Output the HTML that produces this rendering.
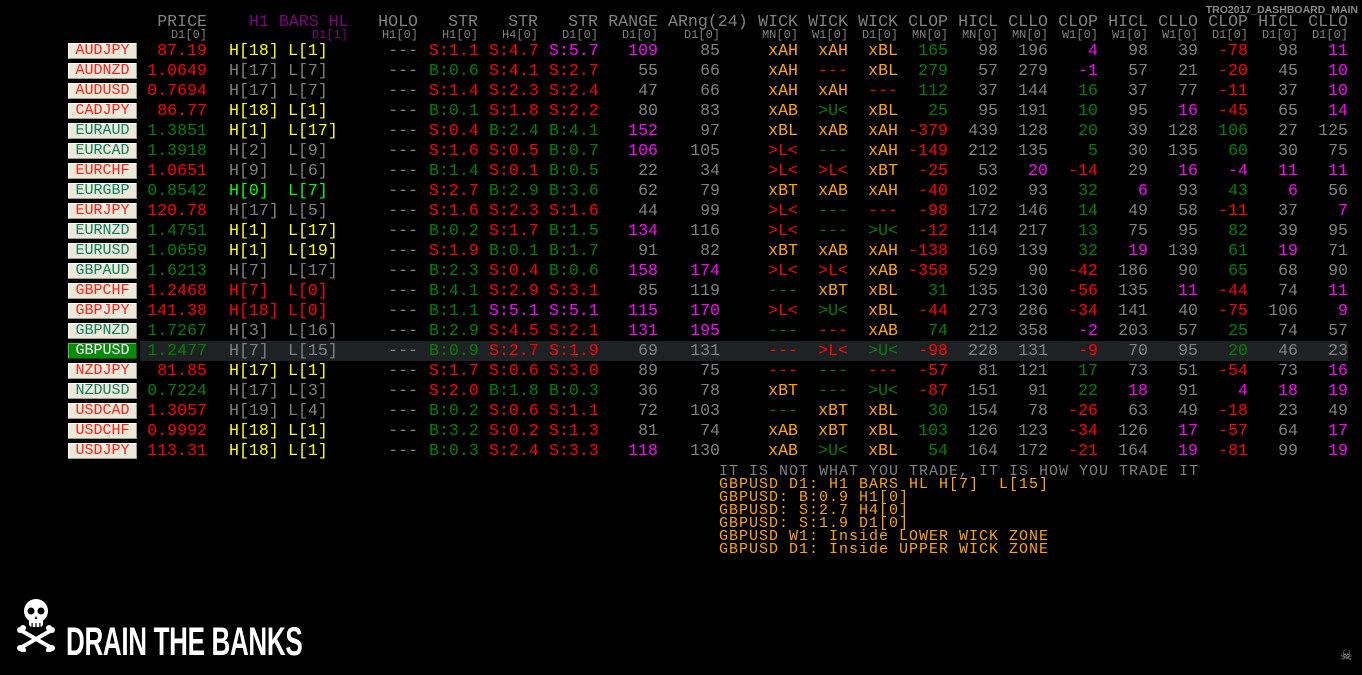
<!DOCTYPE html>
<html><head><meta charset="utf-8"><style>
html,body{margin:0;padding:0;background:#000;width:1362px;height:675px;overflow:hidden}
body{position:relative;font-family:"Liberation Mono","DejaVu Sans Mono",monospace;font-size:16.6px;color:#808080}
.r{position:absolute;left:0;width:1362px;height:20px;line-height:20px}
.r span{position:absolute;white-space:pre}
.b{left:68px;top:2px;width:69px;height:16px;line-height:16px;background:#ece9d8;text-align:center;font-size:15px;box-shadow:inset -1px -1px 0 #a09c8c,inset 1px 1px 0 #fff}
.bg{background:#0a8a0a;color:#fff!important;box-shadow:inset -1px -1px 0 #05500a,inset 1px 1px 0 #4c4}
.p{left:137px;width:70px;text-align:right}
.h{left:229px}.l{left:288px}
.o{left:378px;width:40px;text-align:right;color:#808080}
.s1{left:429px}.s2{left:489px}.s3{left:549px}
.w{width:50px;text-align:right}
.x1{left:608px}.x2{left:670px}.x3{left:748px}.x4{left:798px}.x5{left:848px}.x6{left:898px}.x7{left:948px}.x8{left:998px}.x9{left:1048px}.x10{left:1098px}.x11{left:1148px}.x12{left:1198px}.x13{left:1248px}.x14{left:1298px}
.R{color:#ff0000}.g{color:#008000}.y{color:#ffff00}.G{color:#808080}.m{color:#ff00ff}.O{color:#ffa500}.L{color:#00ff00}.t{color:#108060}.br{color:#ff2020}
.hd{position:absolute;top:12px;height:20px;line-height:20px;color:#808080;white-space:pre;text-align:right}
.sb{position:absolute;top:29px;font-size:12px;line-height:12px;color:#808080;white-space:pre;text-align:right}
.note{position:absolute;left:719px;top:465px;line-height:13px;white-space:pre;color:#ffa500;font-size:15px;letter-spacing:1px}
</style></head><body>
<div style="position:absolute;right:4px;top:4px;font:bold 10.5px 'Liberation Sans',sans-serif;color:#8a8a8a;white-space:nowrap">TRO2017_DASHBOARD_MAIN</div>

<div class="hd" style="left:137px;width:70px">PRICE</div><div class="sb" style="left:137px;width:70px">D1[0]</div>
<div class="hd" style="left:249px;color:#800080">H1 BARS HL</div><div class="sb" style="left:298px;width:50px;color:#800080">D1[1]</div>
<div class="hd" style="left:368px;width:50px">HOLO</div><div class="sb" style="left:368px;width:50px">H1[0]</div>
<div class="hd" style="left:428px;width:50px">STR</div><div class="sb" style="left:428px;width:50px">H1[0]</div>
<div class="hd" style="left:488px;width:50px">STR</div><div class="sb" style="left:488px;width:50px">H4[0]</div>
<div class="hd" style="left:548px;width:50px">STR</div><div class="sb" style="left:548px;width:50px">D1[0]</div>
<div class="hd" style="left:598px;width:60px">RANGE</div><div class="sb" style="left:608px;width:50px">D1[0]</div>
<div class="hd" style="left:668px">ARng(24)</div><div class="sb" style="left:670px;width:50px">D1[0]</div>
<div class="hd" style="left:748px;width:50px">WICK</div><div class="sb" style="left:748px;width:50px">MN[0]</div>
<div class="hd" style="left:798px;width:50px">WICK</div><div class="sb" style="left:798px;width:50px">W1[0]</div>
<div class="hd" style="left:848px;width:50px">WICK</div><div class="sb" style="left:848px;width:50px">D1[0]</div>
<div class="hd" style="left:898px;width:50px">CLOP</div><div class="sb" style="left:898px;width:50px">MN[0]</div>
<div class="hd" style="left:948px;width:50px">HICL</div><div class="sb" style="left:948px;width:50px">MN[0]</div>
<div class="hd" style="left:998px;width:50px">CLLO</div><div class="sb" style="left:998px;width:50px">MN[0]</div>
<div class="hd" style="left:1048px;width:50px">CLOP</div><div class="sb" style="left:1048px;width:50px">W1[0]</div>
<div class="hd" style="left:1098px;width:50px">HICL</div><div class="sb" style="left:1098px;width:50px">W1[0]</div>
<div class="hd" style="left:1148px;width:50px">CLLO</div><div class="sb" style="left:1148px;width:50px">W1[0]</div>
<div class="hd" style="left:1198px;width:50px">CLOP</div><div class="sb" style="left:1198px;width:50px">D1[0]</div>
<div class="hd" style="left:1248px;width:50px">HICL</div><div class="sb" style="left:1248px;width:50px">D1[0]</div>
<div class="hd" style="left:1298px;width:50px">CLLO</div><div class="sb" style="left:1298px;width:50px">D1[0]</div>

<div class="r" style="top:41px"><span class="b br">AUDJPY</span><span class="p R">87.19</span><span class="h y">H[18]</span><span class="l y">L[1]</span><span class="o">---</span><span class="s1 R">S:1.1</span><span class="s2 R">S:4.7</span><span class="s3 m">S:5.7</span><span class="w x1 m">109</span><span class="w x2 G">85</span><span class="w x3 O">xAH</span><span class="w x4 O">xAH</span><span class="w x5 O">xBL</span><span class="w x6 g">165</span><span class="w x7 G">98</span><span class="w x8 G">196</span><span class="w x9 m">4</span><span class="w x10 G">98</span><span class="w x11 G">39</span><span class="w x12 R">-78</span><span class="w x13 G">98</span><span class="w x14 m">11</span></div>
<div class="r" style="top:61px"><span class="b br">AUDNZD</span><span class="p R">1.0649</span><span class="h G">H[17]</span><span class="l G">L[7]</span><span class="o">---</span><span class="s1 g">B:0.6</span><span class="s2 R">S:4.1</span><span class="s3 R">S:2.7</span><span class="w x1 G">55</span><span class="w x2 G">66</span><span class="w x3 O">xAH</span><span class="w x4 R">---</span><span class="w x5 O">xBL</span><span class="w x6 g">279</span><span class="w x7 G">57</span><span class="w x8 G">279</span><span class="w x9 m">-1</span><span class="w x10 G">57</span><span class="w x11 G">21</span><span class="w x12 R">-20</span><span class="w x13 G">45</span><span class="w x14 m">10</span></div>
<div class="r" style="top:81px"><span class="b br">AUDUSD</span><span class="p R">0.7694</span><span class="h G">H[17]</span><span class="l G">L[7]</span><span class="o">---</span><span class="s1 R">S:1.4</span><span class="s2 R">S:2.3</span><span class="s3 R">S:2.4</span><span class="w x1 G">47</span><span class="w x2 G">66</span><span class="w x3 O">xAH</span><span class="w x4 O">xAH</span><span class="w x5 R">---</span><span class="w x6 g">112</span><span class="w x7 G">37</span><span class="w x8 G">144</span><span class="w x9 g">16</span><span class="w x10 G">37</span><span class="w x11 G">77</span><span class="w x12 R">-11</span><span class="w x13 G">37</span><span class="w x14 m">10</span></div>
<div class="r" style="top:101px"><span class="b br">CADJPY</span><span class="p R">86.77</span><span class="h y">H[18]</span><span class="l y">L[1]</span><span class="o">---</span><span class="s1 g">B:0.1</span><span class="s2 R">S:1.8</span><span class="s3 R">S:2.2</span><span class="w x1 G">80</span><span class="w x2 G">83</span><span class="w x3 O">xAB</span><span class="w x4 g">&gt;U&lt;</span><span class="w x5 O">xBL</span><span class="w x6 g">25</span><span class="w x7 G">95</span><span class="w x8 G">191</span><span class="w x9 g">10</span><span class="w x10 G">95</span><span class="w x11 m">16</span><span class="w x12 R">-45</span><span class="w x13 G">65</span><span class="w x14 m">14</span></div>
<div class="r" style="top:121px"><span class="b t">EURAUD</span><span class="p g">1.3851</span><span class="h y">H[1]</span><span class="l y">L[17]</span><span class="o">---</span><span class="s1 R">S:0.4</span><span class="s2 g">B:2.4</span><span class="s3 g">B:4.1</span><span class="w x1 m">152</span><span class="w x2 G">97</span><span class="w x3 O">xBL</span><span class="w x4 O">xAB</span><span class="w x5 O">xAH</span><span class="w x6 R">-379</span><span class="w x7 G">439</span><span class="w x8 G">128</span><span class="w x9 g">20</span><span class="w x10 G">39</span><span class="w x11 G">128</span><span class="w x12 g">106</span><span class="w x13 G">27</span><span class="w x14 G">125</span></div>
<div class="r" style="top:141px"><span class="b t">EURCAD</span><span class="p g">1.3918</span><span class="h G">H[2]</span><span class="l G">L[9]</span><span class="o">---</span><span class="s1 R">S:1.6</span><span class="s2 R">S:0.5</span><span class="s3 g">B:0.7</span><span class="w x1 m">106</span><span class="w x2 G">105</span><span class="w x3 R">&gt;L&lt;</span><span class="w x4 g">---</span><span class="w x5 O">xAH</span><span class="w x6 R">-149</span><span class="w x7 G">212</span><span class="w x8 G">135</span><span class="w x9 g">5</span><span class="w x10 G">30</span><span class="w x11 G">135</span><span class="w x12 g">60</span><span class="w x13 G">30</span><span class="w x14 G">75</span></div>
<div class="r" style="top:161px"><span class="b br">EURCHF</span><span class="p R">1.0651</span><span class="h G">H[9]</span><span class="l G">L[6]</span><span class="o">---</span><span class="s1 g">B:1.4</span><span class="s2 R">S:0.1</span><span class="s3 g">B:0.5</span><span class="w x1 G">22</span><span class="w x2 G">34</span><span class="w x3 R">&gt;L&lt;</span><span class="w x4 R">&gt;L&lt;</span><span class="w x5 O">xBT</span><span class="w x6 R">-25</span><span class="w x7 G">53</span><span class="w x8 m">20</span><span class="w x9 R">-14</span><span class="w x10 G">29</span><span class="w x11 m">16</span><span class="w x12 m">-4</span><span class="w x13 m">11</span><span class="w x14 m">11</span></div>
<div class="r" style="top:181px"><span class="b t">EURGBP</span><span class="p g">0.8542</span><span class="h L">H[0]</span><span class="l L">L[7]</span><span class="o">---</span><span class="s1 R">S:2.7</span><span class="s2 g">B:2.9</span><span class="s3 g">B:3.6</span><span class="w x1 G">62</span><span class="w x2 G">79</span><span class="w x3 O">xBT</span><span class="w x4 O">xAB</span><span class="w x5 O">xAH</span><span class="w x6 R">-40</span><span class="w x7 G">102</span><span class="w x8 G">93</span><span class="w x9 g">32</span><span class="w x10 m">6</span><span class="w x11 G">93</span><span class="w x12 g">43</span><span class="w x13 m">6</span><span class="w x14 G">56</span></div>
<div class="r" style="top:201px"><span class="b br">EURJPY</span><span class="p R">120.78</span><span class="h G">H[17]</span><span class="l G">L[5]</span><span class="o">---</span><span class="s1 R">S:1.6</span><span class="s2 R">S:2.3</span><span class="s3 R">S:1.6</span><span class="w x1 G">44</span><span class="w x2 G">99</span><span class="w x3 R">&gt;L&lt;</span><span class="w x4 g">---</span><span class="w x5 R">---</span><span class="w x6 R">-98</span><span class="w x7 G">172</span><span class="w x8 G">146</span><span class="w x9 g">14</span><span class="w x10 G">49</span><span class="w x11 G">58</span><span class="w x12 R">-11</span><span class="w x13 G">37</span><span class="w x14 m">7</span></div>
<div class="r" style="top:221px"><span class="b t">EURNZD</span><span class="p g">1.4751</span><span class="h y">H[1]</span><span class="l y">L[17]</span><span class="o">---</span><span class="s1 g">B:0.2</span><span class="s2 R">S:1.7</span><span class="s3 g">B:1.5</span><span class="w x1 m">134</span><span class="w x2 G">116</span><span class="w x3 R">&gt;L&lt;</span><span class="w x4 g">---</span><span class="w x5 g">&gt;U&lt;</span><span class="w x6 R">-12</span><span class="w x7 G">114</span><span class="w x8 G">217</span><span class="w x9 g">13</span><span class="w x10 G">75</span><span class="w x11 G">95</span><span class="w x12 g">82</span><span class="w x13 G">39</span><span class="w x14 G">95</span></div>
<div class="r" style="top:241px"><span class="b t">EURUSD</span><span class="p g">1.0659</span><span class="h y">H[1]</span><span class="l y">L[19]</span><span class="o">---</span><span class="s1 R">S:1.9</span><span class="s2 g">B:0.1</span><span class="s3 g">B:1.7</span><span class="w x1 G">91</span><span class="w x2 G">82</span><span class="w x3 O">xBT</span><span class="w x4 O">xAB</span><span class="w x5 O">xAH</span><span class="w x6 R">-138</span><span class="w x7 G">169</span><span class="w x8 G">139</span><span class="w x9 g">32</span><span class="w x10 m">19</span><span class="w x11 G">139</span><span class="w x12 g">61</span><span class="w x13 m">19</span><span class="w x14 G">71</span></div>
<div class="r" style="top:261px"><span class="b t">GBPAUD</span><span class="p g">1.6213</span><span class="h G">H[7]</span><span class="l G">L[17]</span><span class="o">---</span><span class="s1 g">B:2.3</span><span class="s2 R">S:0.4</span><span class="s3 g">B:0.6</span><span class="w x1 m">158</span><span class="w x2 m">174</span><span class="w x3 R">&gt;L&lt;</span><span class="w x4 R">&gt;L&lt;</span><span class="w x5 O">xAB</span><span class="w x6 R">-358</span><span class="w x7 G">529</span><span class="w x8 G">90</span><span class="w x9 R">-42</span><span class="w x10 G">186</span><span class="w x11 G">90</span><span class="w x12 g">65</span><span class="w x13 G">68</span><span class="w x14 G">90</span></div>
<div class="r" style="top:281px"><span class="b br">GBPCHF</span><span class="p R">1.2468</span><span class="h R">H[7]</span><span class="l R">L[0]</span><span class="o">---</span><span class="s1 g">B:4.1</span><span class="s2 R">S:2.9</span><span class="s3 R">S:3.1</span><span class="w x1 G">85</span><span class="w x2 G">119</span><span class="w x3 g">---</span><span class="w x4 O">xBT</span><span class="w x5 O">xBL</span><span class="w x6 g">31</span><span class="w x7 G">135</span><span class="w x8 G">130</span><span class="w x9 R">-56</span><span class="w x10 G">135</span><span class="w x11 m">11</span><span class="w x12 R">-44</span><span class="w x13 G">74</span><span class="w x14 m">11</span></div>
<div class="r" style="top:301px"><span class="b br">GBPJPY</span><span class="p R">141.38</span><span class="h R">H[18]</span><span class="l R">L[0]</span><span class="o">---</span><span class="s1 g">B:1.1</span><span class="s2 m">S:5.1</span><span class="s3 m">S:5.1</span><span class="w x1 m">115</span><span class="w x2 m">170</span><span class="w x3 R">&gt;L&lt;</span><span class="w x4 g">&gt;U&lt;</span><span class="w x5 O">xBL</span><span class="w x6 R">-44</span><span class="w x7 G">273</span><span class="w x8 G">286</span><span class="w x9 R">-34</span><span class="w x10 G">141</span><span class="w x11 G">40</span><span class="w x12 R">-75</span><span class="w x13 G">106</span><span class="w x14 m">9</span></div>
<div class="r" style="top:321px"><span class="b t">GBPNZD</span><span class="p g">1.7267</span><span class="h G">H[3]</span><span class="l G">L[16]</span><span class="o">---</span><span class="s1 g">B:2.9</span><span class="s2 R">S:4.5</span><span class="s3 R">S:2.1</span><span class="w x1 m">131</span><span class="w x2 m">195</span><span class="w x3 g">---</span><span class="w x4 R">---</span><span class="w x5 O">xAB</span><span class="w x6 g">74</span><span class="w x7 G">212</span><span class="w x8 G">358</span><span class="w x9 m">-2</span><span class="w x10 G">203</span><span class="w x11 G">57</span><span class="w x12 g">25</span><span class="w x13 G">74</span><span class="w x14 G">57</span></div>
<div class="r" style="top:341px"><span style="left:140px;top:0;width:1208px;height:20px;background:#1e2224"></span><span class="b bg">GBPUSD</span><span class="p g">1.2477</span><span class="h G">H[7]</span><span class="l G">L[15]</span><span class="o">---</span><span class="s1 g">B:0.9</span><span class="s2 R">S:2.7</span><span class="s3 R">S:1.9</span><span class="w x1 G">69</span><span class="w x2 G">131</span><span class="w x3 R">---</span><span class="w x4 R">&gt;L&lt;</span><span class="w x5 g">&gt;U&lt;</span><span class="w x6 R">-98</span><span class="w x7 G">228</span><span class="w x8 G">131</span><span class="w x9 R">-9</span><span class="w x10 G">70</span><span class="w x11 G">95</span><span class="w x12 g">20</span><span class="w x13 G">46</span><span class="w x14 G">23</span></div>
<div class="r" style="top:361px"><span class="b br">NZDJPY</span><span class="p R">81.85</span><span class="h y">H[17]</span><span class="l y">L[1]</span><span class="o">---</span><span class="s1 R">S:1.7</span><span class="s2 R">S:0.6</span><span class="s3 R">S:3.0</span><span class="w x1 G">89</span><span class="w x2 G">75</span><span class="w x3 R">---</span><span class="w x4 g">---</span><span class="w x5 R">---</span><span class="w x6 R">-57</span><span class="w x7 G">81</span><span class="w x8 G">121</span><span class="w x9 g">17</span><span class="w x10 G">73</span><span class="w x11 G">51</span><span class="w x12 R">-54</span><span class="w x13 G">73</span><span class="w x14 m">16</span></div>
<div class="r" style="top:381px"><span class="b t">NZDUSD</span><span class="p g">0.7224</span><span class="h G">H[17]</span><span class="l G">L[3]</span><span class="o">---</span><span class="s1 R">S:2.0</span><span class="s2 g">B:1.8</span><span class="s3 g">B:0.3</span><span class="w x1 G">36</span><span class="w x2 G">78</span><span class="w x3 O">xBT</span><span class="w x4 g">---</span><span class="w x5 g">&gt;U&lt;</span><span class="w x6 R">-87</span><span class="w x7 G">151</span><span class="w x8 G">91</span><span class="w x9 g">22</span><span class="w x10 m">18</span><span class="w x11 G">91</span><span class="w x12 m">4</span><span class="w x13 m">18</span><span class="w x14 m">19</span></div>
<div class="r" style="top:401px"><span class="b br">USDCAD</span><span class="p R">1.3057</span><span class="h G">H[19]</span><span class="l G">L[4]</span><span class="o">---</span><span class="s1 g">B:0.2</span><span class="s2 R">S:0.6</span><span class="s3 R">S:1.1</span><span class="w x1 G">72</span><span class="w x2 G">103</span><span class="w x3 g">---</span><span class="w x4 O">xBT</span><span class="w x5 O">xBL</span><span class="w x6 g">30</span><span class="w x7 G">154</span><span class="w x8 G">78</span><span class="w x9 R">-26</span><span class="w x10 G">63</span><span class="w x11 G">49</span><span class="w x12 R">-18</span><span class="w x13 G">23</span><span class="w x14 G">49</span></div>
<div class="r" style="top:421px"><span class="b br">USDCHF</span><span class="p R">0.9992</span><span class="h y">H[18]</span><span class="l y">L[1]</span><span class="o">---</span><span class="s1 g">B:3.2</span><span class="s2 R">S:0.2</span><span class="s3 R">S:1.3</span><span class="w x1 G">81</span><span class="w x2 G">74</span><span class="w x3 O">xAB</span><span class="w x4 O">xBT</span><span class="w x5 O">xBL</span><span class="w x6 g">103</span><span class="w x7 G">126</span><span class="w x8 G">123</span><span class="w x9 R">-34</span><span class="w x10 G">126</span><span class="w x11 m">17</span><span class="w x12 R">-57</span><span class="w x13 G">64</span><span class="w x14 m">17</span></div>
<div class="r" style="top:441px"><span class="b br">USDJPY</span><span class="p R">113.31</span><span class="h y">H[18]</span><span class="l y">L[1]</span><span class="o">---</span><span class="s1 g">B:0.3</span><span class="s2 R">S:2.4</span><span class="s3 R">S:3.3</span><span class="w x1 m">118</span><span class="w x2 G">130</span><span class="w x3 O">xAB</span><span class="w x4 g">&gt;U&lt;</span><span class="w x5 O">xBL</span><span class="w x6 g">54</span><span class="w x7 G">164</span><span class="w x8 G">172</span><span class="w x9 R">-21</span><span class="w x10 G">164</span><span class="w x11 m">19</span><span class="w x12 R">-81</span><span class="w x13 G">99</span><span class="w x14 m">19</span></div>

<div class="note"><span style="color:#808080">IT IS NOT WHAT YOU TRADE, IT IS HOW YOU TRADE IT</span>
GBPUSD D1: H1 BARS HL H[7]  L[15]
GBPUSD: B:0.9 H1[0]
GBPUSD: S:2.7 H4[0]
GBPUSD: S:1.9 D1[0]
GBPUSD W1: Inside LOWER WICK ZONE
GBPUSD D1: Inside UPPER WICK ZONE</div>

<svg style="position:absolute;left:16px;top:598px" width="40" height="54" viewBox="0 0 40 54">
<g fill="#fff">
<ellipse cx="20" cy="13" rx="12" ry="12"/>
<rect x="13" y="18" width="14" height="11" rx="3"/>
</g>
<g fill="#000">
<circle cx="15" cy="13" r="3.5"/><circle cx="25" cy="13" r="3.5"/>
<path d="M20 18 l-1.5 3 h3z"/>
<rect x="15.5" y="25" width="1.2" height="4"/><rect x="19.4" y="25" width="1.2" height="4"/><rect x="23.3" y="25" width="1.2" height="4"/>
</g>
<g stroke="#fff" stroke-width="4" stroke-linecap="round">
<line x1="6" y1="33" x2="34" y2="49"/><line x1="34" y1="33" x2="6" y2="49"/>
</g>
<g fill="#fff"><circle cx="4" cy="32" r="3"/><circle cx="7" cy="30" r="3"/><circle cx="36" cy="32" r="3"/><circle cx="33" cy="30" r="3"/><circle cx="4" cy="50" r="3"/><circle cx="7" cy="52" r="3"/><circle cx="36" cy="50" r="3"/><circle cx="33" cy="52" r="3"/></g>
</svg>
<div style="position:absolute;left:66px;top:622px;font:bold 40px 'Liberation Sans',sans-serif;line-height:40px;color:#fff;transform:scaleX(0.65);transform-origin:0 0;white-space:nowrap;letter-spacing:-0.5px">DRAIN THE BANKS</div>
<div style="position:absolute;left:1340px;top:648px;font:14px 'DejaVu Sans',sans-serif;color:#aaa">☠</div>
</body></html>
